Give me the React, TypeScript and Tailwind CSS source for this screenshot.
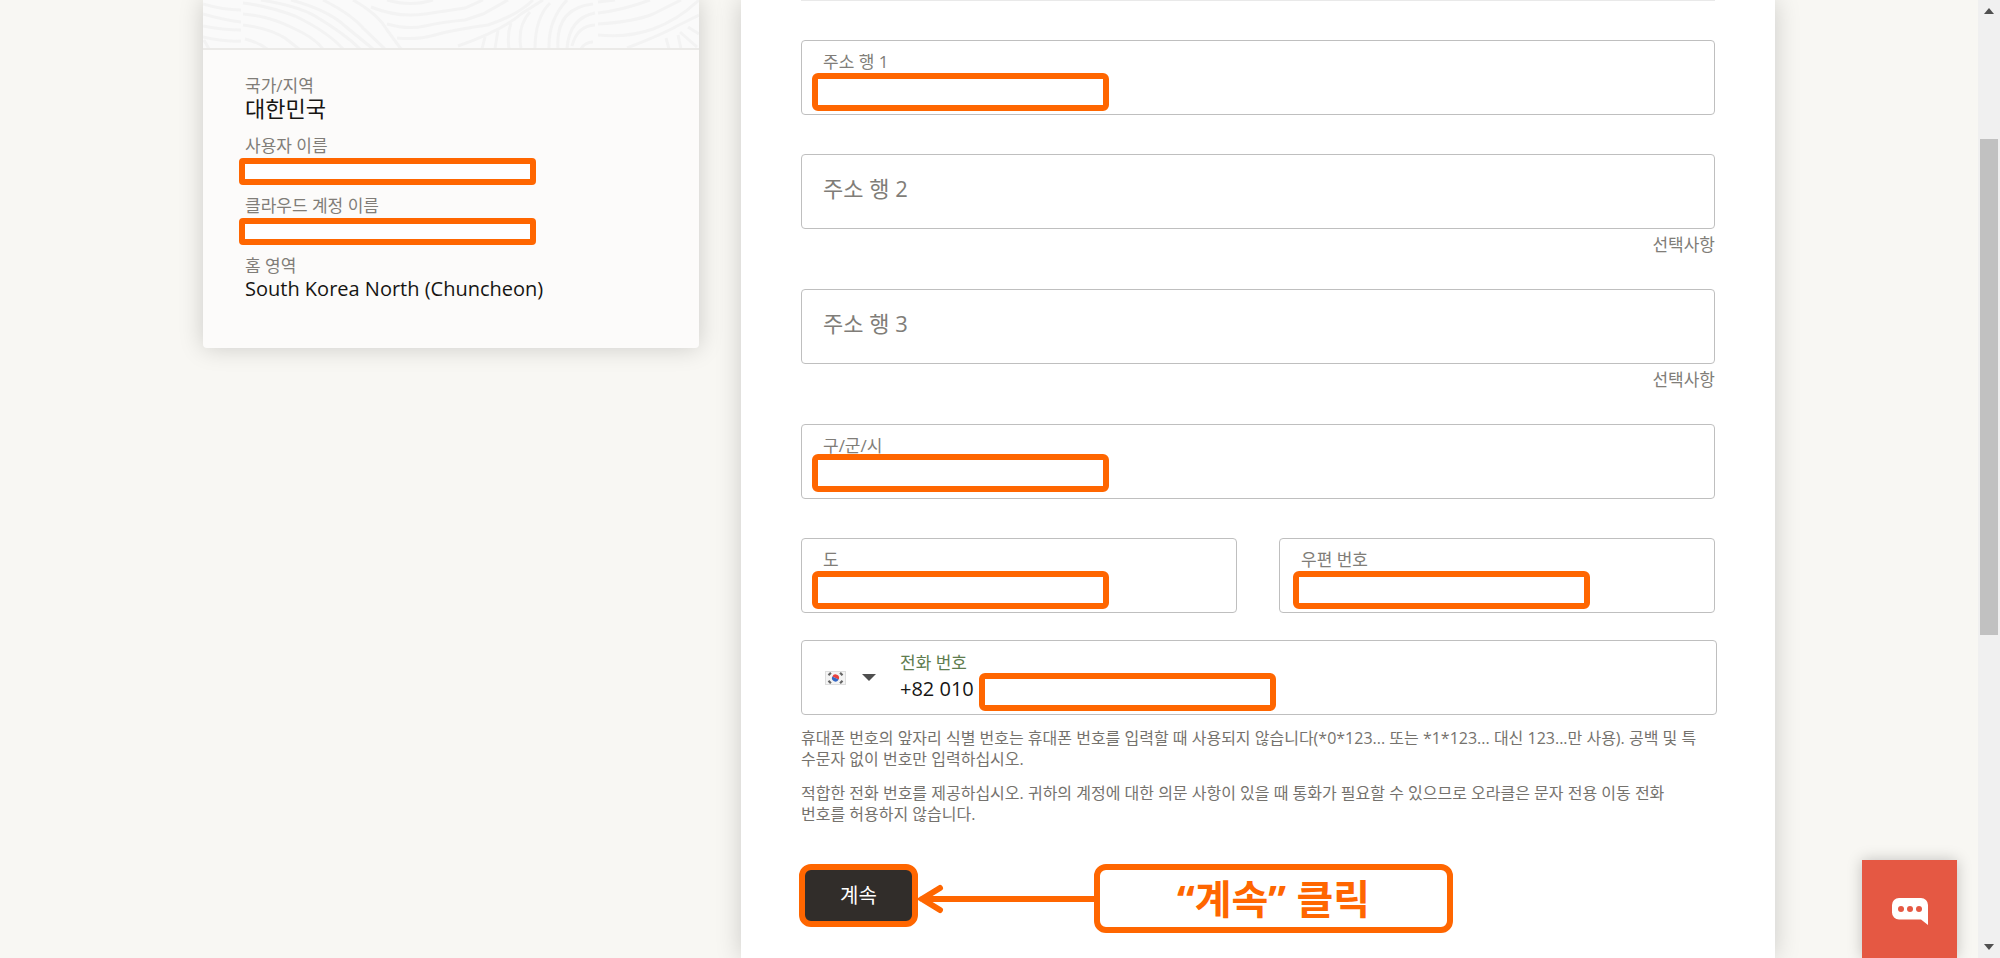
import { useState } from "react";

const Mask = ({ className }: { className: string }) => (
  <span className={`w-[297px] border-6 border-[#ff6600] bg-white ${className}`} />
);

interface FieldProps {
  id: string;
  label: string;
  filled?: boolean;
  optional?: boolean;
  maskClass?: string;
}

const Field = ({ id, label, filled, optional, maskClass }: FieldProps) => {
  const [value, setValue] = useState("");
  return (
    <div className="flex-1">
      <div className="relative">
        <input
          id={id}
          value={value}
          onChange={(e) => setValue(e.target.value)}
          className="block h-[75px] w-full rounded border border-[#bfbfbf] bg-white px-[22px] pt-6 text-[20px] text-[#161513] outline-none"
        />
        <label
          htmlFor={id}
          className={`pointer-events-none absolute left-[22px] text-[#807d78] ${
            filled || value ? "top-3 text-[17px] leading-5" : "top-[18px] text-[22px] leading-8"
          }`}
        >
          {label}
        </label>
        {filled && <Mask className={`absolute h-[38px] rounded-md ${maskClass}`} />}
      </div>
      {optional && <p className="mt-1.5 -mb-[5px] text-right text-[17px] leading-5 text-[#807d78]">선택사항</p>}
    </div>
  );
};

// Contour lines behind the card header
const contours = [
  "M0 4Q20 10 38 10", "M0 14Q20 20 38 22", "M0 26Q20 30 38 30", "M0 37Q20 42 38 41", "M1 40L6 49",
  "M40 3Q65 6 92 16Q125 32 140 49", "M40 14Q66 16 90 28Q112 38 120 49", "M40 25Q66 28 82 38L96 49",
  "M42 39Q55 42 64 49", "M58 0Q95 6 112 16Q142 34 157 49", "M88 0Q125 10 142 26L170 49",
  "M120 0Q148 14 160 28L182 49", "M150 0Q175 14 184 30L198 49", "M168 7Q195 18 222 14T262 8L280 0",
  "M184 24Q205 30 222 26T262 20L280 14L305 0", "M194 38Q215 40 232 35T285 25Q315 15 330 0",
  "M184 0Q208 7 230 0", "M255 46Q300 30 318 14L340 0", "M282 37L279 49", "M295 30L292 49",
  "M308 23Q304 34 306 49", "M327 12Q314 26 318 49", "M347 3Q332 18 332 49", "M364 0Q345 20 346 49",
  "M390 4Q352 8 355 49", "M392 13Q366 18 364 49", "M392 25Q374 26 369 46", "M390 42Q382 42 378 49",
  "M395 35Q425 38 450 29T496 0", "M395 24Q430 22 450 14L478 0", "M395 13Q420 10 447 0", "M395 2L412 0",
  "M424 48Q460 34 474 26L496 15", "M463 38L466 49", "M475 35L478 49", "M477 32L494 47", "M485 27L496 34",
];

const AccountSummary = () => (
  <aside className="flex w-[496px] shrink-0 flex-col self-start overflow-hidden rounded-b bg-[#fcfbfa] shadow-[0_0_24px_rgba(0,0,0,0.18)]">
    <svg className="block h-12 w-full bg-[#fafafa]" viewBox="0 0 496 48" preserveAspectRatio="xMidYMid slice" aria-hidden="true">
      {contours.map((d) => (
        <path key={d} d={d} fill="none" stroke="#f3f3f3" strokeWidth="3" />
      ))}
    </svg>
    <dl className="flex flex-col border-t-2 border-[#ebeae8] px-[42px] pt-[26px] pb-[46px]">
      <dt className="text-[17px] leading-5 text-[#807d78]">국가/지역</dt>
      <dd className="mb-4 text-[22px] leading-6 text-[#161513]">대한민국</dd>
      <dt className="text-[17px] leading-5 text-[#807d78]">사용자 이름</dt>
      <dd className="mt-0.5 mb-[11px] -ml-1.5 flex">
        <Mask className="h-[27px] rounded" />
      </dd>
      <dt className="text-[17px] leading-5 text-[#807d78]">클라우드 계정 이름</dt>
      <dd className="mt-0.5 mb-[11px] -ml-1.5 flex">
        <Mask className="h-[27px] rounded" />
      </dd>
      <dt className="text-[17px] leading-5 text-[#807d78]">홈 영역</dt>
      <dd className="text-[20px] leading-[26px] text-[#161513]">South Korea North (Chuncheon)</dd>
    </dl>
  </aside>
);

const KoreaFlag = () => (
  <svg className="h-[14px] w-[21px]" viewBox="0 0 21 14" aria-hidden="true">
    <rect x="0.5" y="0.5" width="20" height="13" fill="#f4f4f4" stroke="#dedede" />
    <path d="M7 7a3.5 3.5 0 0 1 7 0z" fill="#e8423f" transform="rotate(25 10.5 7)" />
    <path d="M7 7a3.5 3.5 0 0 0 7 0z" fill="#3568c4" transform="rotate(25 10.5 7)" />
    <path d="M3.5 4.2l2.4-2.4M15.1 1.8l2.4 2.4M3.5 9.8l2.4 2.4M15.1 12.2l2.4-2.4" stroke="#666" strokeWidth="2.2" />
  </svg>
);

const PhoneField = () => {
  const [phone, setPhone] = useState("+82 010");
  return (
    <div className="relative flex h-[75px] items-center rounded border border-[#bfbfbf] pl-[23px]">
      <button type="button" aria-label="국가 코드" className="flex items-center gap-4">
        <KoreaFlag />
        <svg className="h-[7px] w-[14px]" viewBox="0 0 14 7" aria-hidden="true">
          <path d="M0 0h14L7 7z" fill="#4f4f4f" />
        </svg>
      </button>
      <div className="ml-6 flex flex-1 flex-col pt-0.5">
        <label htmlFor="phone" className="text-[17px] leading-5 text-[#5f7d4f]">전화 번호</label>
        <input
          id="phone"
          type="tel"
          value={phone}
          onChange={(e) => setPhone(e.target.value)}
          className="h-8 w-full bg-transparent text-[20px] text-[#161513] outline-none"
        />
      </div>
      <Mask className="absolute top-8 left-[177px] h-[38px] rounded-md" />
    </div>
  );
};

const ScrollTrack = () => (
  <div className="flex w-[22px] shrink-0 flex-col items-center bg-[#f0f0f0] py-2" aria-hidden="true">
    <svg className="h-[6px] w-[10px]" viewBox="0 0 10 6">
      <path d="M0 6h10L5 0z" fill="#505050" />
    </svg>
    <div className="mt-[125px] h-[496px] w-[18px] bg-[#c1c1c1]" />
    <svg className="mt-auto h-[6px] w-[10px]" viewBox="0 0 10 6">
      <path d="M0 0h10L5 6z" fill="#505050" />
    </svg>
  </div>
);

export default function App() {
  return (
    <div className="flex min-h-screen bg-[#f8f7f3] font-['Open_Sans','Noto_Sans_CJK_KR',sans-serif]">
      <div className="mx-auto flex max-w-[1572px] flex-1 gap-[42px]">
        <AccountSummary />
        <main className="flex-1 bg-white px-[60px] pb-5 shadow-[0_0_24px_rgba(0,0,0,0.18)]">
          <form onSubmit={(e) => e.preventDefault()} className="flex flex-col border-t border-[#e9e9e9] pt-[39px]">
            <div className="flex flex-col gap-[39px]">
              <Field id="address1" label="주소 행 1" filled maskClass="top-[33px] left-[11px]" />
              <Field id="address2" label="주소 행 2" optional />
              <Field id="address3" label="주소 행 3" optional />
              <Field id="city" label="구/군/시" filled maskClass="top-[30px] left-[11px]" />
              <div className="flex gap-[42px]">
                <Field id="province" label="도" filled maskClass="top-[33px] left-[11px]" />
                <Field id="zip" label="우편 번호" filled maskClass="top-[33px] left-[14px]" />
              </div>
            </div>
            <div className="mt-[27px] -mr-0.5">
              <PhoneField />
            </div>
            <div className="mt-[13px] flex flex-col gap-[13px] text-[16px] leading-[21px] text-[#75726d]">
              <p>
                휴대폰 번호의 앞자리 식별 번호는 휴대폰 번호를 입력할 때 사용되지 않습니다(*0*123... 또는 *1*123... 대신 123...만 사용). 공백 및 특
                <br />
                수문자 없이 번호만 입력하십시오.
              </p>
              <p>
                적합한 전화 번호를 제공하십시오. 귀하의 계정에 대한 의문 사항이 있을 때 통화가 필요할 수 있으므로 오라클은 문자 전용 이동 전화
                <br />
                번호를 허용하지 않습니다.
              </p>
            </div>
            <div className="mt-[39px] -ml-0.5 flex items-start">
              <button type="submit" className="h-[63px] w-[119px] rounded-xl border-6 border-[#ff6600] bg-[#312d2a] text-[20px] text-white">
                계속
              </button>
              <svg className="h-[30px] w-[176px] self-center" viewBox="0 0 176 30" aria-hidden="true">
                <path d="M176 15H4M22 4L4 15l18 11" fill="none" stroke="#ff6600" strokeWidth="6" strokeLinecap="round" strokeLinejoin="miter" />
              </svg>
              <p className="flex h-[69px] w-[359px] items-center justify-center rounded-xl border-6 border-[#ff6600] bg-white text-[40px] leading-none font-bold text-[#ff6600]">
                “계속” 클릭
              </p>
            </div>
          </form>
        </main>
      </div>
      <ScrollTrack />
      {/* Chat launcher */}
      <button
        type="button"
        aria-label="채팅"
        className="fixed right-[43px] bottom-0 flex h-[98px] w-[95px] items-center justify-center bg-[#e55843] pt-1 shadow-[0_0_14px_rgba(0,0,0,0.22)]"
      >
        <svg className="h-[27px] w-9" viewBox="0 0 36 27" aria-hidden="true">
          <path d="M7 0h22a7 7 0 0 1 7 7v20l-7-5.5H7a7 7 0 0 1-7-7V7a7 7 0 0 1 7-7z" fill="#fff" />
          <circle cx="9" cy="11" r="3" fill="#e55843" />
          <circle cx="18" cy="11" r="3" fill="#e55843" />
          <circle cx="27" cy="11" r="3" fill="#e55843" />
        </svg>
      </button>
    </div>
  );
}
